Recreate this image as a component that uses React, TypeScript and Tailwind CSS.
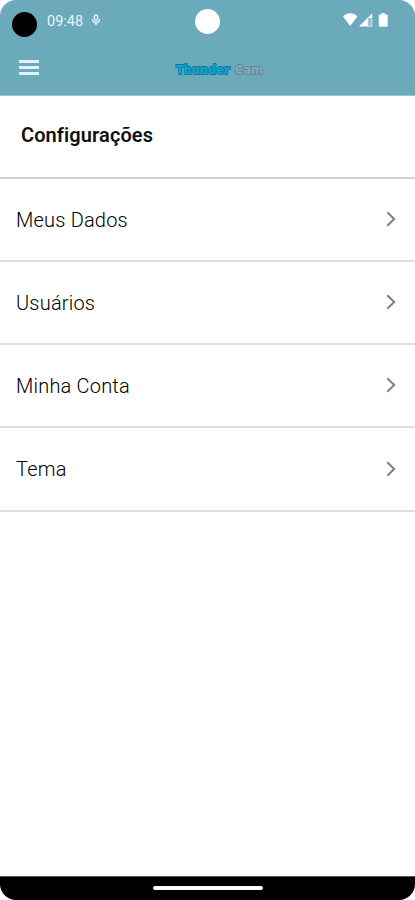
interface MenuItem {
  label: string
}

const items: MenuItem[] = [
  { label: 'Meus Dados' },
  { label: 'Usuários' },
  { label: 'Minha Conta' },
  { label: 'Tema' },
]

function StatusBar() {
  return (
    <div className="grid grid-cols-3 h-[42px]">
      <div className="flex items-start pl-3 pt-3">
        <div className="w-[25px] h-[25px] rounded-full bg-black shrink-0" />
        <span className="ml-[10px] mt-[1px] text-[14.5px] leading-[18px] text-[#e8f7fc]">09:48</span>
        <svg className="ml-[8px] mt-[2px] w-[10px] h-[12px] shrink-0" viewBox="0 0 10 12" fill="none" stroke="#dff1f7">
          <rect x="3.4" y="1" width="3.2" height="5.4" rx="1.6" strokeWidth="1.5" />
          <path d="M1.5 5.2a3.5 3.5 0 0 0 7 0M5 8.7v2.3" strokeWidth="1.6" />
        </svg>
      </div>
      <div className="flex justify-center pt-[9px]">
        <div className="w-[25px] h-[25px] rounded-full bg-white" />
      </div>
      <div className="flex justify-end items-start pt-3 pr-[26px]">
        <svg className="w-[47px] h-[16px]" viewBox="0 0 47 16" fill="#fff">
          <path d="M1 4.4C5.2 0.2 11.2 0.2 15.4 4.4L8.2 14z" />
          <path d="M30 1.5V14.5H17z" />
          <path d="M26 6h4.2v8.4h-4.2z" fill="#8fc0cd" />
          <path d="M25.8 6v8.5M29.9 1.8v12.7M25.8 14.2h4.2" stroke="#d5eaf0" strokeWidth="0.8" />
          <path d="M39.5 1h3.4v1.4h2q.8 0 .8.8v10.7q0 .8-.8.8h-7.3q-.8 0-.8-.8V3.2q0-.8.8-.8h1.9z" />
        </svg>
      </div>
    </div>
  )
}

function Logo() {
  return (
    <svg
      className="w-[92px] h-[18px]"
      viewBox="0 0 92 18"
      fontFamily="'DejaVu Sans', sans-serif"
      fontWeight="700"
      fontSize="12.5"
      strokeWidth="1.8"
      strokeLinejoin="round"
      paintOrder="stroke"
    >
      <text x="3" y="13.6" textLength="54" lengthAdjust="spacingAndGlyphs" fill="#08a7d2" stroke="#087a9f">
        Thunder
      </text>
      <text x="62" y="13.6" textLength="28" lengthAdjust="spacingAndGlyphs" fill="#83abb9" stroke="#688592">
        Cam
      </text>
    </svg>
  )
}

function Header() {
  return (
    <header className="h-24 bg-[#6aaabb] border-b border-[#a0c6d1]">
      <StatusBar />
      <div className="grid grid-cols-3 h-[53px]">
        <div className="pl-[19px] pt-[18px]">
          <div className="flex flex-col gap-[3px] w-[20px]">
            <div className="h-[3px] bg-[#e0f2f7]" />
            <div className="h-[3px] bg-[#e0f2f7]" />
            <div className="h-[3px] bg-[#e0f2f7]" />
          </div>
        </div>
        <div className="flex justify-center pt-[18px] pl-6">
          <Logo />
        </div>
      </div>
    </header>
  )
}

function MenuRow({ label }: MenuItem) {
  return (
    <li className="flex items-center justify-between h-[83px] last:h-[84px] pl-4 pr-[19px] border-b-2 border-[#dedede]">
      <span className="text-[20px] leading-6 tracking-[0.2px] font-light text-black">{label}</span>
      <svg className="mb-[1px] w-[10px] h-[16px]" viewBox="0 0 10 16" fill="none" stroke="#808080" strokeWidth="2">
        <path d="M1.3 1.3L8.2 8L1.3 14.7" />
      </svg>
    </li>
  )
}

export default function App() {
  return (
    <div className="h-[900px] w-[415px] bg-white">
      <div className="flex flex-col h-full rounded-[16px] overflow-hidden font-[Roboto,sans-serif]">
        <Header />
        <main className="flex-1">
          <div className="h-[83px] pl-[21px] pt-[27px] border-b-2 border-[#d3d3d3]">
            <h1 className="text-[20px] leading-6 tracking-[0.1px] font-semibold text-[#111]">Configurações</h1>
          </div>
          <ul>
            {items.map((item) => (
              <MenuRow key={item.label} label={item.label} />
            ))}
          </ul>
        </main>
        <footer className="flex justify-center h-6 pt-[9px] bg-black border-t border-[#555]">
          <div className="w-[110px] h-[4px] rounded-full bg-white" />
        </footer>
      </div>
    </div>
  )
}
